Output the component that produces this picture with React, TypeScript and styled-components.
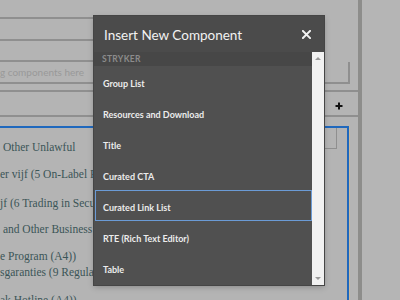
import React from 'react';
import styled, { createGlobalStyle } from 'styled-components';

const GlobalStyle = createGlobalStyle`
  html, body {
    margin: 0;
    padding: 0;
    background: #b4b4b4;
  }
`;

const Page = styled.div`
  position: relative;
  display: flex;
  width: 400px;
  height: 300px;
  overflow: hidden;
  background: #b4b4b4;
`;

const Editor = styled.div`
  width: 358px;
  display: flex;
  flex-direction: column;
`;

const Divider = styled.div`
  width: 4px;
  background: #8d8d8b;
`;

const Side = styled.div`
  flex: 1;
  background: #b5b5b5;
`;

const Strip = styled.div<{ h: number; w?: number }>`
  height: ${(p) => p.h}px;
  width: ${(p) => (p.w ? `${p.w}px` : '100%')};
  border-bottom: 2px solid #8f8f8f;
  flex-shrink: 0;
`;

const DropZone = styled.div`
  height: 20px;
  width: 348px;
  margin-left: -2px;
  border: 2px solid #8f8f8f;
  border-top: none;
  display: flex;
  align-items: center;
  font-family: Lato, 'Open Sans', sans-serif;
  font-size: 10px;
  color: #999999;
  flex-shrink: 0;
`;

const Gap = styled.div<{ h: number }>`
  height: ${(p) => p.h}px;
  flex-shrink: 0;
`;

const ToolRow = styled.div`
  height: 27px;
  display: flex;
  justify-content: flex-end;
  align-items: center;
  padding: 4px 15px 0 0;
  box-sizing: border-box;
  border-top: 2px solid #8f8f8f;
  border-bottom: 2px solid #8f8f8f;
  flex-shrink: 0;
`;

const Plus = styled.svg`
  width: 8px;
  height: 8px;
`;

const ContentBox = styled.div`
  position: relative;
  width: 347px;
  flex: 1;
  border-top: 2px solid #1f68bd;
  border-right: 2px solid #1f68bd;
  box-shadow: 1px 0 0 #c9b89c;
  padding-top: 12px;
  font-family: 'Liberation Serif', serif;
  font-size: 11.5px;
  color: #3b5557;
`;

const MiniBox = styled.div`
  position: absolute;
  top: 0;
  right: 10px;
  width: 30px;
  height: 20px;
  border: 1px solid #8f8f8f;
  border-top: none;
`;

const Para = styled.div<{ mt: number }>`
  margin-top: ${(p) => p.mt}px;
  line-height: 15px;
  white-space: nowrap;
`;

const Modal = styled.div`
  position: absolute;
  left: 94px;
  top: 16px;
  width: 230px;
  height: 269px;
  display: flex;
  flex-direction: column;
  background: #505050;
  box-shadow: 0 0 0 1px #454545, 0 2px 6px rgba(0, 0, 0, 0.25);
  font-family: Lato, 'Open Sans', sans-serif;
`;

const Header = styled.div`
  height: 36px;
  display: flex;
  align-items: center;
  justify-content: space-between;
  padding: 1px 13px 0 10px;
  box-sizing: border-box;
  background: #4b4b4b;
  color: #f2f2f2;
  font-size: 13.5px;
  flex-shrink: 0;
`;

const Close = styled.svg`
  width: 9px;
  height: 9px;
`;

const Body = styled.div`
  flex: 1;
  display: flex;
  min-height: 0;
`;

const List = styled.div`
  flex: 1;
  display: flex;
  flex-direction: column;
`;

const Section = styled.div`
  height: 14px;
  display: flex;
  align-items: center;
  padding-left: 8px;
  background: #474747;
  color: #8c8c8c;
  font-size: 8.5px;
  font-weight: bold;
  letter-spacing: 0.3px;
`;

const Item = styled.div<{ selected?: boolean }>`
  height: 31px;
  box-sizing: border-box;
  display: flex;
  align-items: center;
  padding: 3px 0 0 7px;
  margin-left: 1px;
  border: 1.5px solid ${(p) => (p.selected ? '#6b9bd6' : 'transparent')};
  color: #ececec;
  font-size: 9px;
  font-weight: bold;
`;

const Scrollbar = styled.div`
  width: 12px;
  background: #f1f1f1;
  display: flex;
  flex-direction: column;
  justify-content: space-between;
  align-items: center;
  padding: 5px 0;
`;

const Arrow = styled.div<{ down?: boolean }>`
  width: 0;
  height: 0;
  border-left: 3px solid transparent;
  border-right: 3px solid transparent;
  ${(p) => (p.down ? 'border-top: 3px solid #9a9a9a;' : 'border-bottom: 3px solid #9a9a9a;')}
`;

const items = [
  'Group List',
  'Resources and Download',
  'Title',
  'Curated CTA',
  'Curated Link List',
  'RTE (Rich Text Editor)',
  'Table',
];

const App: React.FC = () => {
  return (
    <Page>
      <GlobalStyle />
      <Editor>
        <Strip h={17} w={320} />
        <Strip h={20} w={320} />
        <Strip h={19} w={320} />
        <DropZone>g components here</DropZone>
        <Gap h={6} />
        <ToolRow>
          <Plus viewBox="0 0 8 8">
            <path d="M4 0.5 V7.5 M0.5 4 H7.5" stroke="#111" strokeWidth="2" />
          </Plus>
        </ToolRow>
        <Gap h={9} />
        <ContentBox>
          <MiniBox />
          <Para mt={0}>&nbsp;Other Unlawful</Para>
          <Para mt={12}>er vijf (5 On-Label Promotion</Para>
          <Para mt={14}>jf (6 Trading in Securities</Para>
          <Para mt={11}>&nbsp;and Other Business</Para>
          <Para mt={12}>e Program (A4))</Para>
          <Para mt={1}>sgaranties (9 Regulatory</Para>
          <Para mt={13}>ak Hotline (A4))</Para>
        </ContentBox>
      </Editor>
      <Divider />
      <Side />
      <Modal>
        <Header>
          <span>Insert New Component</span>
          <Close viewBox="0 0 10 10">
            <path d="M1 1 L9 9 M9 1 L1 9" stroke="#f2f2f2" strokeWidth="2.2" strokeLinecap="square" />
          </Close>
        </Header>
        <Body>
          <List>
            <Section>STRYKER</Section>
            {items.map((label) => (
              <Item key={label} selected={label === 'Curated Link List'}>
                {label}
              </Item>
            ))}
          </List>
          <Scrollbar>
            <Arrow />
            <Arrow down />
          </Scrollbar>
        </Body>
      </Modal>
    </Page>
  );
};

export default App;
